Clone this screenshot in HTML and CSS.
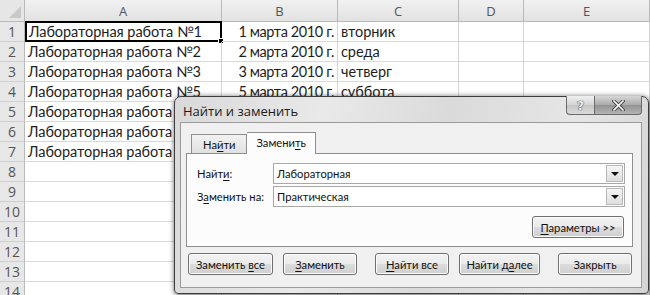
FILE: index.html
```html
<!DOCTYPE html>
<html lang="ru">
<head>
  <meta charset="UTF-8" />
  <title>Найти и заменить</title>
  <link rel="stylesheet" href="styles.css">
</head>
<body>

  <!-- SHEET -->
  <div class="sheet">
    <div class="corner"><span class="corner-tri"></span></div>
    <div class="colhead">A</div>
    <div class="colhead">B</div>
    <div class="colhead">C</div>
    <div class="colhead">D</div>
    <div class="colhead">E</div>

    <div class="rowhead">1</div>
    <div class="cell selected">Лабораторная работа №1<span class="handle"></span></div>
    <div class="cell num">1 марта 2010 г.</div>
    <div class="cell">вторник</div>
    <div class="cell"></div>
    <div class="cell"></div>

    <div class="rowhead">2</div>
    <div class="cell">Лабораторная работа №2</div>
    <div class="cell num">2 марта 2010 г.</div>
    <div class="cell">среда</div>
    <div class="cell"></div>
    <div class="cell"></div>

    <div class="rowhead">3</div>
    <div class="cell">Лабораторная работа №3</div>
    <div class="cell num">3 марта 2010 г.</div>
    <div class="cell">четверг</div>
    <div class="cell"></div>
    <div class="cell"></div>

    <div class="rowhead">4</div>
    <div class="cell">Лабораторная работа №5</div>
    <div class="cell num">5 марта 2010 г.</div>
    <div class="cell">суббота</div>
    <div class="cell"></div>
    <div class="cell"></div>

    <div class="rowhead">5</div>
    <div class="cell">Лабораторная работа №6</div>
    <div class="cell num"></div>
    <div class="cell"></div>
    <div class="cell"></div>
    <div class="cell"></div>

    <div class="rowhead">6</div>
    <div class="cell">Лабораторная работа №7</div>
    <div class="cell num"></div>
    <div class="cell"></div>
    <div class="cell"></div>
    <div class="cell"></div>

    <div class="rowhead">7</div>
    <div class="cell">Лабораторная работа №8</div>
    <div class="cell num"></div>
    <div class="cell"></div>
    <div class="cell"></div>
    <div class="cell"></div>

    <div class="rowhead">8</div>
    <div class="cell"></div><div class="cell"></div><div class="cell"></div><div class="cell"></div><div class="cell"></div>
    <div class="rowhead">9</div>
    <div class="cell"></div><div class="cell"></div><div class="cell"></div><div class="cell"></div><div class="cell"></div>
    <div class="rowhead">10</div>
    <div class="cell"></div><div class="cell"></div><div class="cell"></div><div class="cell"></div><div class="cell"></div>
    <div class="rowhead">11</div>
    <div class="cell"></div><div class="cell"></div><div class="cell"></div><div class="cell"></div><div class="cell"></div>
    <div class="rowhead">12</div>
    <div class="cell"></div><div class="cell"></div><div class="cell"></div><div class="cell"></div><div class="cell"></div>
    <div class="rowhead">13</div>
    <div class="cell"></div><div class="cell"></div><div class="cell"></div><div class="cell"></div><div class="cell"></div>
    <div class="rowhead">14</div>
    <div class="cell"></div><div class="cell"></div><div class="cell"></div><div class="cell"></div><div class="cell"></div>
  </div>

  <!-- FIND & REPLACE DIALOG -->
  <div class="dialog">
    <div class="titlebar">
      <span class="title">Найти и заменить</span>
      <div class="caption-btns">
        <span class="cap-btn help">?</span>
        <span class="cap-btn close">
          <svg width="13" height="11" viewBox="0 0 13 11">
            <path d="M2 1 L11 10 M11 1 L2 10" stroke="#444" stroke-width="3.4" stroke-linecap="square"/>
            <path d="M2 1 L11 10 M11 1 L2 10" stroke="#fff" stroke-width="1.6" stroke-linecap="square"/>
          </svg>
        </span>
      </div>
    </div>

    <div class="client">
      <div class="tabs">
        <span class="tab">На<u>й</u>ти</span>
        <span class="tab active">Замени<u>т</u>ь</span>
      </div>

      <div class="panel">
        <div class="field">
          <label>Найт<u>и</u>:</label>
          <div class="combo">
            <span class="combo-text">Лабораторная</span>
            <span class="drop"><span class="arrow"></span></span>
          </div>
        </div>
        <div class="field">
          <label>З<u>а</u>менить на:</label>
          <div class="combo">
            <span class="combo-text">Практическая</span>
            <span class="drop"><span class="arrow"></span></span>
          </div>
        </div>
        <div class="options-row">
          <button class="btn options"><u>П</u>араметры &gt;&gt;</button>
        </div>
      </div>

      <div class="actions">
        <div class="group">
          <button class="btn w-all">Заменить <u>в</u>се</button>
          <button class="btn w-one"><u>З</u>аменить</button>
        </div>
        <div class="group">
          <button class="btn w-one"><u>Н</u>айти все</button>
          <button class="btn w-next">Найти д<u>а</u>лее</button>
        </div>
        <button class="btn w-one">Закрыть</button>
      </div>
    </div>
  </div>

</body>
</html>
```

FILE: styles.css
```css
* {
  box-sizing: border-box;
  margin: 0;
  padding: 0;
}

body {
  width: 650px;
  height: 295px;
  overflow: hidden;
  position: relative;
  background: #fff;
  font-family: 'Lato', 'Open Sans', sans-serif;
  color: #1e1e1e;
}

/* ---------- sheet ---------- */
.sheet {
  display: grid;
  grid-template-columns: 25px 197px 116px 121px 65px 126px;
  grid-template-rows: 22px repeat(14, 20px);
}

.corner,
.colhead,
.rowhead {
  background: linear-gradient(#f1f1f1, #e2e2e2);
  border-right: 1px solid #b9b9b9;
  border-bottom: 1px solid #b9b9b9;
  color: #555;
  font-family: 'Open Sans', sans-serif;
  font-size: 13px;
}

.corner {
  position: relative;
  background: #e6e6e6;
}

.corner-tri {
  position: absolute;
  right: 3px;
  bottom: 3px;
  border-left: 12px solid transparent;
  border-bottom: 12px solid #c8c8c8;
}

.colhead {
  display: flex;
  align-items: center;
  justify-content: center;
  padding-top: 1px;
}

.rowhead {
  display: flex;
  align-items: center;
  justify-content: center;
  background: #e7e7e7;
  border-bottom-color: #cfcfcf;
  font-size: 14px;
}

.cell {
  border-right: 1px solid #d4d4d4;
  border-bottom: 1px solid #d9d9d9;
  font-size: 14.5px;
  letter-spacing: -0.05px;
  line-height: 20px;
  padding: 0 3px;
  white-space: nowrap;
  overflow: hidden;
  position: relative;
}

.cell.num {
  text-align: right;
  letter-spacing: -0.4px;
}

.cell.selected {
  overflow: visible;
  border: 2px solid #000;
  margin: -1px 0 0 0;
  padding: 0 2px;
  line-height: 18px;
  height: 21px;
}

.handle {
  position: absolute;
  right: -4px;
  bottom: -4px;
  width: 6px;
  height: 6px;
  background: #000;
  border: 1px solid #fff;
}

/* ---------- dialog ---------- */
.dialog {
  position: absolute;
  left: 174px;
  top: 96px;
  width: 475px;
  height: 198px;
  border: 1px solid #3d3d3d;
  border-radius: 7px 7px 4px 4px;
  background: linear-gradient(100deg, #d9d9d9 0%, #e9e9e9 30%, #dadada 55%, #e6e6e6 80%, #d4d4d4 100%);
  box-shadow: 0 0 5px rgba(0, 0, 0, 0.45), 2px 3px 6px rgba(0, 0, 0, 0.3);
  font-family: 'Lato', 'Open Sans', sans-serif;
  font-size: 11.2px;
  color: #111;
  display: flex;
  flex-direction: column;
  padding: 0 6px 5px 5px;
}

.titlebar {
  height: 25px;
  display: flex;
  align-items: flex-start;
  justify-content: space-between;
}

.title {
  padding: 5px 0 0 3px;
  font-family: 'Open Sans', sans-serif;
  font-size: 13px;
  color: #1a1a1a;
}

.caption-btns {
  display: flex;
  margin-top: -1px;
}

.cap-btn {
  height: 19px;
  display: flex;
  align-items: center;
  justify-content: center;
  border: 1px solid #6a6a6a;
  border-top: none;
}

.cap-btn.help {
  width: 29px;
  border-radius: 0 0 0 4px;
  background: linear-gradient(#f0f0f0, #d4d4d4 50%, #c6c6c6 51%, #dadada);
  color: #eee;
  font-family: 'DejaVu Sans', sans-serif;
  font-size: 13px;
  font-weight: bold;
  text-shadow: 0 0 1px #333, 0 0 1px #333;
}

.cap-btn.close {
  width: 47px;
  border-left: none;
  border-radius: 0 0 4px 0;
  background: linear-gradient(#d6d6d6, #aaaaaa 50%, #929292 51%, #b4b4b4);
}

.client {
  flex: 1;
  background: #f0f0f0;
  border: 1px solid #9a9a9a;
  display: flex;
  flex-direction: column;
  padding: 0 8px 0 5px;
}

.tabs {
  display: flex;
  align-items: flex-end;
  height: 30px;
  padding-left: 5px;
}

.tab {
  height: 19px;
  padding: 0 10px 0 11px;
  border: 1px solid #8e8e8e;
  border-bottom: none;
  background: linear-gradient(#f2f2f2, #e0e0e0);
  display: flex;
  align-items: center;
}

.tab.active {
  height: 22px;
  padding: 0 9px 2px 10px;
  background: #fcfcfc;
  border-left: none;
  position: relative;
  top: 1px;
}

.panel {
  background: #fcfcfc;
  border: 1px solid #8e8e8e;
  height: 94px;
  padding: 9px 7px 0 10px;
}

.field {
  display: flex;
  align-items: center;
  height: 21px;
}

.field + .field {
  margin-top: 2px;
}

.field label {
  width: 76px;
}

.combo {
  flex: 1;
  height: 21px;
  border: 1px solid #a8a8a8;
  background: #fff;
  display: flex;
  align-items: center;
  padding: 0 1px 0 3px;
}

.combo-text {
  flex: 1;
}

.drop {
  width: 17px;
  height: 17px;
  border: 1px solid #b8b8b8;
  background: linear-gradient(#f6f6f6, #dedede);
  display: flex;
  align-items: center;
  justify-content: center;
}

.arrow {
  border-left: 4px solid transparent;
  border-right: 4px solid transparent;
  border-top: 4px solid #111;
}

.options-row {
  display: flex;
  justify-content: flex-end;
  margin-top: 9px;
  padding-right: 1px;
}

.btn {
  height: 22px;
  font-family: 'Lato', 'Open Sans', sans-serif;
  font-size: 11.2px;
  color: #111;
  border: 1px solid #707070;
  border-radius: 3px;
  background: linear-gradient(#f3f3f3 0%, #ebebeb 48%, #dcdcdc 52%, #cfcfcf 100%);
  box-shadow: inset 0 0 0 1px #fbfbfb;
}

.btn.options {
  width: 92px;
}

.actions {
  display: flex;
  justify-content: space-between;
  margin-top: 6px;
  padding-left: 2px;
  padding-right: 1px;
}

.group {
  display: flex;
  gap: 10px;
}

.w-all {
  width: 85px;
}

.w-one {
  width: 74px;
}

.w-next {
  width: 81px;
}

u {
  text-decoration-thickness: 1px;
  text-underline-offset: 2px;
}
```
